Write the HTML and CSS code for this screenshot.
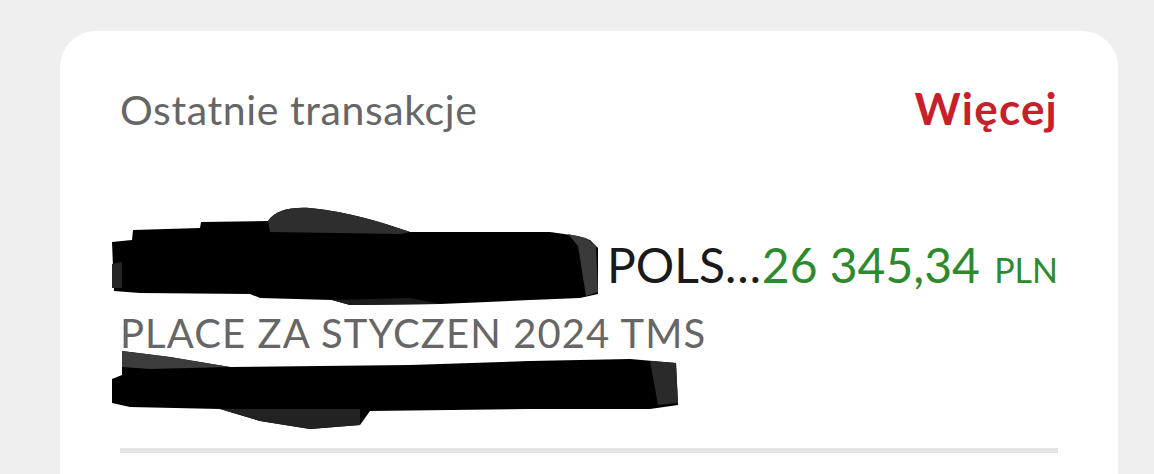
FILE: index.html
```html
<!DOCTYPE html>
<html lang="pl">
<head>
    <meta charset="UTF-8">
    <meta name="viewport" content="width=device-width, initial-scale=1.0">
    <title>Ostatnie transakcje</title>
    <link rel="stylesheet" href="styles.css">
</head>
<body>

    <div class="card">
        <div class="card-header">
            <h2 class="card-title">Ostatnie transakcje</h2>
            <a class="more-link" href="#">Więcej</a>
        </div>

        <div class="tx">
            <div class="tx-row">
                <span class="tx-name">
                    <!-- nazwa zamazana -->
                    <span class="redact redact-name">
                        <svg viewBox="0 0 490 100" width="490" height="100">
                            <path d="M2,36 L22,34 L23,24 L90,22 L91,16 L158,15 C166,4 180,1 200,2 C240,6 270,16 300,26 L440,26 L468,30 L480,34 L488,42 L488,88 L470,92 L420,94 L330,98 L240,99 L222,94 L150,92 L140,88 L30,87 L4,85 Z" fill="#000"/>
                            <path d="M158,15 C166,4 180,1 200,2 C240,6 270,16 300,26 L290,28 L160,26 Z" fill="#2e2e2e"/>
                            <path d="M458,28 L476,32 L486,40 L488,86 L476,90 L468,40 Z" fill="#3a3a3a"/>
                            <path d="M2,58 L12,56 L12,82 L2,82 Z" fill="#262626"/>
                            <path d="M240,99 L222,94 L300,92 L330,98 Z" fill="#1c1c1c"/>
                        </svg>
                    </span>POLS…</span>
                <span class="tx-amount">26 345,34 <span class="tx-currency">PLN</span></span>
            </div>
            <div class="tx-desc">PLACE ZA STYCZEN 2024 TMS</div>
            <!-- druga linia zamazana -->
            <div class="redact redact-line">
                <svg viewBox="0 0 570 86" width="570" height="86">
                    <path d="M12,4 L60,10 L120,20 L300,18 L420,14 L520,12 L566,16 L568,58 L540,62 L420,62 L260,64 L250,78 L200,82 L150,74 L110,62 L20,60 L2,56 L2,32 L12,28 Z" fill="#000"/>
                    <path d="M12,4 L60,10 L120,20 L40,22 L12,20 Z" fill="#3c3c3c"/>
                    <path d="M110,62 L250,62 L250,78 L200,82 L150,74 Z" fill="#222"/>
                    <path d="M540,14 L566,16 L568,56 L548,58 Z" fill="#2a2a2a"/>
                </svg>
            </div>
        </div>

        <hr class="divider">
    </div>

</body>
</html>
```

FILE: styles.css
```css
/* Ogólny wygląd strony */
body {
    margin: 0;
    background-color: #efefef;
    font-family: 'Lato', 'Liberation Sans', sans-serif;
    overflow: hidden;
}

/* Karta z transakcjami */
.card {
    margin: 31px 36px 0 60px;
    background-color: #ffffff;
    border-radius: 36px 36px 0 0;
    padding: 53px 60px 60px 60px;
}

.card-header {
    display: flex;
    justify-content: space-between;
    align-items: baseline;
    line-height: 48px;
}

.card-title {
    margin: 0;
    font-size: 41px;
    letter-spacing: 0.6px;
    font-weight: normal;
    color: #666666;
}

.more-link {
    font-size: 44px;
    letter-spacing: 1.2px;
    font-weight: bold;
    color: #c8202b;
    text-decoration: none;
}

/* Pojedyncza transakcja */
.tx {
    margin-top: 101px;
}

.tx-row {
    display: flex;
    justify-content: space-between;
    align-items: baseline;
    line-height: 60px;
    font-size: 48px;
}

.tx-name {
    color: #1a1a1a;
    white-space: nowrap;
}

.tx-amount {
    color: #2d8a2d;
    white-space: nowrap;
}

.tx-currency {
    font-size: 34px;
    margin-left: 2px;
}

.tx-desc {
    font-size: 40px;
    letter-spacing: 1.1px;
    line-height: 44px;
    color: #666666;
    margin-top: 11px;
}

/* Zamazane fragmenty */
.redact {
    position: relative;
}

.redact svg {
    position: absolute;
    display: block;
}

.redact-name {
    display: inline-block;
    width: 497px;
    height: 1px;
    margin-left: -10px;
}

.redact-name svg {
    left: 0;
    top: -76px;
}

.redact-line {
    height: 84px;
    margin-top: -8px;
}

.redact-line svg {
    left: -10px;
    top: 0;
}

.divider {
    border: none;
    height: 5px;
    background-color: #e4e4e4;
    margin: 17px 0 0 0;
}
```
